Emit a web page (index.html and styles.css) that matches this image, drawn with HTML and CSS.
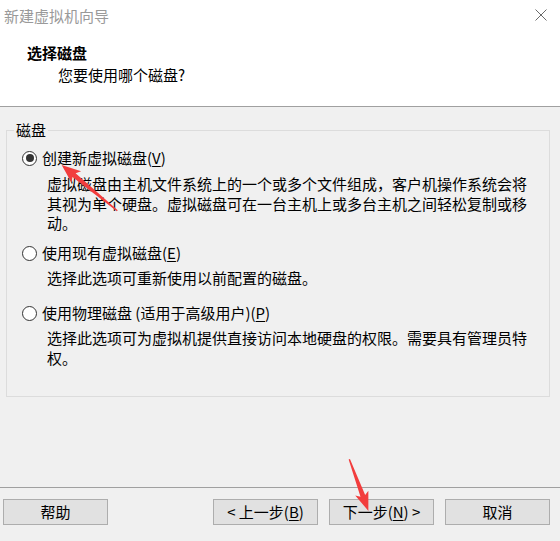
FILE: index.html
```html
<!DOCTYPE html>
<html lang="zh-CN">
<head>
<meta charset="utf-8">
<title>新建虚拟机向导</title>
<link rel="stylesheet" href="styles.css">
</head>
<body>
<div class="window">
  <div class="titlebar">
    <span class="title">新建虚拟机向导</span>
    <svg class="close" width="12" height="12" viewBox="0 0 12 12"><path d="M0.5 0.5 L11.5 11.5 M11.5 0.5 L0.5 11.5" stroke="#6a6a6a" stroke-width="1" fill="none"/></svg>
  </div>
  <div class="header">
    <div class="heading">选择磁盘</div>
    <div class="subheading">您要使用哪个磁盘?</div>
  </div>
  <div class="content">
    <fieldset class="group">
      <legend class="legend">磁盘</legend>
      <div class="option first">
        <span class="radio checked"></span>
        <span class="label">创建新虚拟磁盘(<u>V</u>)</span>
      </div>
      <div class="desc d1">虚拟磁盘由主机文件系统上的一个或多个文件组成，客户机操作系统会将<br>其视为单个硬盘。虚拟磁盘可在一台主机上或多台主机之间轻松复制或移<br>动。</div>
      <div class="option second">
        <span class="radio"></span>
        <span class="label">使用现有虚拟磁盘(<u>E</u>)</span>
      </div>
      <div class="desc">选择此选项可重新使用以前配置的磁盘。</div>
      <div class="option third">
        <span class="radio"></span>
        <span class="label">使用物理磁盘 (适用于高级用户)(<u>P</u>)</span>
      </div>
      <div class="desc">选择此选项可为虚拟机提供直接访问本地硬盘的权限。需要具有管理员特<br>权。</div>
    </fieldset>
  </div>
  <div class="footer">
    <button class="btn">帮助</button>
    <div class="nav">
      <button class="btn">&lt; 上一步(<u>B</u>)</button>
      <button class="btn">下一步(<u>N</u>) &gt;</button>
      <button class="btn">取消</button>
    </div>
  </div>
  <svg class="annot" width="560" height="541" viewBox="0 0 560 541">
    <polygon fill="#f23d3d" transform="translate(117.3 210.7) rotate(-140.6)" points="0,-0.7 56,-2.5 53,-7.5 72,0 53,7.5 56,2.5 0,0.7"/>
    <polygon fill="#f23d3d" transform="translate(349.3 459.3) rotate(69.7)" points="0,-0.7 39,-2.5 36,-7 55,0 36,7 39,2.5 0,0.7"/>
  </svg>
</div>
</body>
</html>
```
FILE: styles.css
```css
html, body {
  margin: 0;
  padding: 0;
}
body {
  font-family: "Noto Sans CJK SC", "Noto Sans", sans-serif;
  font-size: 15px;
  color: #000;
  background: #f0f0f0;
}
.window {
  position: relative;
  width: 560px;
  height: 541px;
  display: flex;
  flex-direction: column;
  overflow: hidden;
}
.titlebar {
  height: 32px;
  background: #fff;
  display: flex;
  align-items: center;
  justify-content: space-between;
  padding: 0 13px 0 4px;
  line-height: 20px;
}
.title {
  color: #9a9a9a;
}
.close {
  display: block;
  margin-top: -2px;
}
.header {
  background: #fff;
  padding: 11px 0 21px 0;
  border-bottom: 1px solid #a0a0a0;
  line-height: 20px;
}
.heading {
  font-weight: bold;
  padding-left: 27px;
}
.subheading {
  margin-top: 2px;
  padding-left: 58px;
}
.content {
  flex: 1;
  padding: 13px 10px 0 6px;
}
.group {
  margin: 0;
  padding: 0 0 0 15px;
  border: 1px solid #dcdcdc;
  height: 277px;
  box-sizing: border-box;
  min-width: 0;
}
.legend {
  padding: 0 2px;
  margin-left: -8px;
  line-height: 20px;
}
.option {
  display: flex;
  align-items: center;
  height: 20px;
  line-height: 20px;
}
.option.first { margin-top: 8px; }
.option.second { margin-top: 10.5px; }
.option.third { margin-top: 15.5px; }
.radio {
  width: 13px;
  height: 13px;
  border: 1px solid #333;
  border-radius: 50%;
  background: #fff;
  margin-left: 0;
  margin-right: 5px;
  display: flex;
  align-items: center;
  justify-content: center;
  flex-shrink: 0;
}
.radio.checked::after {
  content: "";
  width: 8px;
  height: 8px;
  border-radius: 50%;
  background: #333;
}
.desc {
  margin-top: 5px;
  padding-left: 25px;
  white-space: nowrap;
  line-height: 19.5px;
}
.desc.d1 { margin-top: 6px; }
u {
  text-decoration: underline;
  text-underline-offset: 2px;
}
.footer {
  height: 42px;
  border-top: 1px solid #a0a0a0;
  display: flex;
  justify-content: space-between;
  align-items: flex-start;
  padding: 11px 10px 0 3px;
  box-sizing: content-box;
}
.nav {
  display: flex;
  gap: 11px;
}
.btn {
  width: 105px;
  height: 26px;
  box-sizing: border-box;
  border: 1px solid #adadad;
  background: #e1e1e1;
  font-family: "Noto Sans CJK SC", "Noto Sans", sans-serif;
  font-size: 15px;
  color: #000;
  padding: 0;
  line-height: 22px;
}
.annot {
  position: absolute;
  left: 0;
  top: 0;
  pointer-events: none;
}
```
